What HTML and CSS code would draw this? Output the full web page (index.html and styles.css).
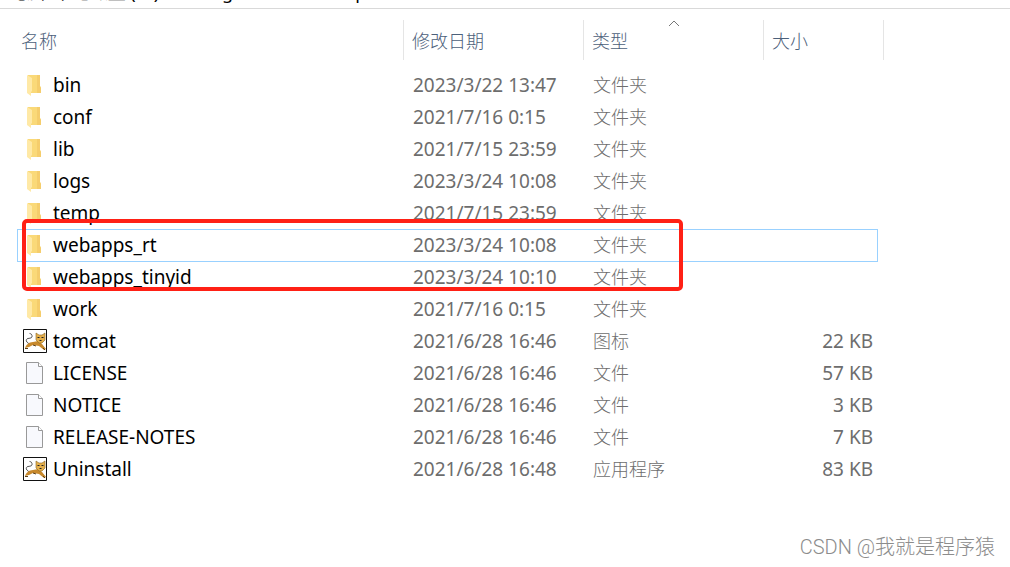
FILE: index.html
```html
<!DOCTYPE html>
<html lang="zh">
<head>
    <meta charset="UTF-8">
    <title>apache-tomcat</title>
    <link rel="stylesheet" href="styles.css">
</head>
<body>
    <!-- 图标 -->
    <svg class="sprite" aria-hidden="true">
        <symbol id="folder" viewBox="0 0 24 24">
            <path d="M5 2h12v11l1 2v5H5z" fill="#fad978"/>
            <path d="M14 2h3v11l1 2v5h-4z" fill="#f5cd6c"/>
            <path d="M4 2l5 3v13l-1 1v4l-4-3z" fill="#ffe9a6"/>
        </symbol>
        <symbol id="file" viewBox="0 0 24 24">
            <path d="M3.500 1.500h12l4 4v17h-16z" fill="#f8f9fd" stroke="#999"/>
            <path d="M15.500 1.500v4h4" fill="#fff" stroke="#999"/>
        </symbol>
        <symbol id="cat" viewBox="0 0 24 24">
            <path d="M.5.500h23v23H.5z" fill="#fff" stroke="#111"/>
            <path d="M7 15C3 14 2 10 5 9.500S9.500 9 9 6.500 6 5 7 4" fill="none" stroke="#555"/>
            <path d="M2 19c1-3 4-6 8-6l5-1 4 3 4 5-2 1-5-4-6-1-4 2-4 1z" fill="#c8892c"/>
            <path d="M13 4l3 2h3l3-2v7l-3 3h-3l-3-3z" fill="#e5b04c" stroke="#8a6424" stroke-width=".6"/>
            <path d="M14.500 8.500h2M18.500 8.500h2M16.500 11.500h2" stroke="#222"/>
            <path d="M2 19.500h3M10 16l3 1M20 19l2 2" stroke="#5c4018"/>
        </symbol>
    </svg>

    <div class="address">电脑 <span class="disk">本地磁盘 (D:)</span><span class="dir">Program Files</span><span>apache-tomcat</span></div>

    <div class="list">
        <table>
            <colgroup>
                <col><col class="col-date"><col class="col-type"><col class="col-size">
            </colgroup>
            <thead>
                <tr>
                    <th><button>名称</button></th>
                    <th><button>修改日期</button></th>
                    <th><button>类型</button><svg class="arrow" viewBox="0 0 12 7"><path d="M1 6l5-5 5 5"/></svg></th>
                    <th><button>大小</button></th>
                </tr>
            </thead>
            <tbody>
                <tr><td><svg class="icon"><use href="#folder"/></svg>bin</td><td>2023/3/22 13:47</td><td>文件夹</td><td></td></tr>
                <tr><td><svg class="icon"><use href="#folder"/></svg>conf</td><td>2021/7/16 0:15</td><td>文件夹</td><td></td></tr>
                <tr><td><svg class="icon"><use href="#folder"/></svg>lib</td><td>2021/7/15 23:59</td><td>文件夹</td><td></td></tr>
                <tr><td><svg class="icon"><use href="#folder"/></svg>logs</td><td>2023/3/24 10:08</td><td>文件夹</td><td></td></tr>
                <tr><td><svg class="icon"><use href="#folder"/></svg>temp</td><td>2021/7/15 23:59</td><td>文件夹</td><td></td></tr>
                <tr class="focused"><td><svg class="icon"><use href="#folder"/></svg>webapps_rt</td><td>2023/3/24 10:08</td><td>文件夹</td><td></td></tr>
                <tr><td><svg class="icon"><use href="#folder"/></svg>webapps_tinyid</td><td>2023/3/24 10:10</td><td>文件夹</td><td></td></tr>
                <tr><td><svg class="icon"><use href="#folder"/></svg>work</td><td>2021/7/16 0:15</td><td>文件夹</td><td></td></tr>
                <tr><td><svg class="icon"><use href="#cat"/></svg>tomcat</td><td>2021/6/28 16:46</td><td>图标</td><td>22 KB</td></tr>
                <tr><td><svg class="icon"><use href="#file"/></svg>LICENSE</td><td>2021/6/28 16:46</td><td>文件</td><td>57 KB</td></tr>
                <tr><td><svg class="icon"><use href="#file"/></svg>NOTICE</td><td>2021/6/28 16:46</td><td>文件</td><td>3 KB</td></tr>
                <tr><td><svg class="icon"><use href="#file"/></svg>RELEASE-NOTES</td><td>2021/6/28 16:46</td><td>文件</td><td>7 KB</td></tr>
                <tr><td><svg class="icon"><use href="#cat"/></svg>Uninstall</td><td>2021/6/28 16:48</td><td>应用程序</td><td>83 KB</td></tr>
            </tbody>
        </table>
        <!-- 红框标注 -->
        <div class="mark"></div>
    </div>

    <div class="watermark">CSDN @我就是程序猿</div>
</body>
</html>
```
FILE: styles.css
```css
body {
    margin: 0;
    min-height: 100vh;
    display: flex;
    flex-direction: column;
    background-color: white;
    font-family: "Noto Sans", "Noto Sans CJK SC", sans-serif;
    font-size: 18px;
    color: #000;
}
.sprite {
    display: none;
}
/* 地址栏，只露出底部 */
.address {
    display: flex;
    align-items: flex-end;
    height: 8px;
    padding-left: 9px;
    overflow: hidden;
    white-space: pre;
    line-height: 32px;
    border-bottom: 1px solid #d9d9d9;
}
.disk {
    margin-left: 4px;
    margin-right: 34px;
}
.dir {
    margin-right: 36px;
}
.list {
    position: relative;
    margin: 11px 126px 0 17px;
}
table {
    width: 100%;
    table-layout: fixed;
    border-collapse: separate;
    border-spacing: 0;
}
.col-date, .col-type {
    width: 180px;
}
.col-size {
    width: 120px;
}
th {
    position: relative;
    height: 40px;
    padding: 0 0 0 8px;
    text-align: left;
    border-right: 1px solid #e5e5e5;
}
th:first-child {
    padding-left: 4px;
}
th button {
    padding: 0;
    border: none;
    background: none;
    font-family: "Noto Sans CJK SC", sans-serif;
    font-size: 18px;
    font-weight: 300;
    color: #4c607a;
}
.arrow {
    position: absolute;
    top: 0;
    left: 50%;
    margin-left: -6px;
    width: 12px;
    height: 7px;
    fill: none;
    stroke: #777;
}
tbody::before {
    content: "";
    display: block;
    height: 9px;
}
tbody tr {
    position: relative;
}
td {
    height: 32px;
    padding: 0 0 0 9px;
    line-height: 32px;
    font-size: 19px;
    color: #6d6d6d;
    white-space: nowrap;
}
td:first-child {
    padding-left: 6px;
    color: #000;
}
td:nth-child(3) {
    font-size: 18px;
    font-weight: 300;
}
td:last-child {
    padding-right: 11px;
    text-align: right;
}
.icon {
    width: 24px;
    height: 24px;
    margin-right: 6px;
    vertical-align: -5px;
}
.focused td:last-child::after {
    content: "";
    position: absolute;
    inset: 0 6px -1px 0;
    border: 1px solid #99d1ff;
}
.mark {
    position: absolute;
    top: 199px;
    left: 5px;
    width: 653px;
    height: 64px;
    border: 4px solid #ff2015;
    border-radius: 5px;
}
.watermark {
    margin-top: auto;
    padding: 0 15px 6px 0;
    font-family: Roboto, "Noto Sans CJK SC", sans-serif;
    font-size: 20px;
    font-weight: 300;
    line-height: 28px;
    text-align: right;
    color: #8c8c8c;
}
```
